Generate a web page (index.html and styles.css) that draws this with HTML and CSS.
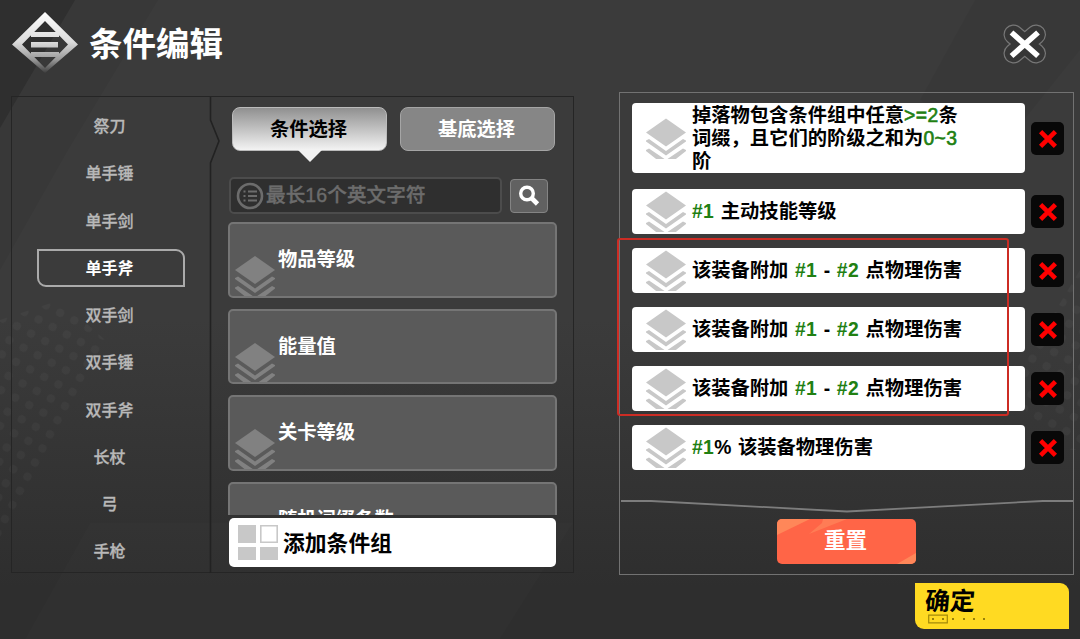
FILE: index.html
```
<!DOCTYPE html>
<html lang="zh-CN">
<head>
    <meta charset="UTF-8">
    <meta name="viewport" content="width=device-width, initial-scale=1.0">
    <title>条件编辑</title>
    <link rel="stylesheet" href="styles.css">
</head>
<body>
    <!-- Shared icons -->
    <svg class="sprite" width="0" height="0">
        <symbol id="layers" viewBox="0 0 40 40">
            <path d="M20 0 40 14 20 28 0 14z"/>
            <path d="M0 22 3 20.5 20 32.5 37 20.5 40 22 40 23 20 37 0 23z"/>
            <path d="M0 31.5 3 30 20 41.5 37 30 40 31.5 40 32.5 28 42 12 42 0 32.5z"/>
        </symbol>
        <symbol id="cross" viewBox="0 0 20 20">
            <path d="M2.6 2.7 17.4 17.3M17.4 2.7 2.6 17.3" stroke="#f00" stroke-width="4.6"/>
        </symbol>
    </svg>

    <!-- Backdrop -->
    <svg class="backdrop" viewBox="0 0 1080 639">
        <defs>
            <pattern id="dots" width="16" height="16" patternUnits="userSpaceOnUse" patternTransform="rotate(28)">
                <circle cx="8" cy="8" r="4" fill="#fff" fill-opacity=".03"/>
            </pattern>
        </defs>
        <path d="M0 0H75L0 128z" fill="#000" fill-opacity=".2"/>
        <path d="M75 0H158L68 150 0 270V128z" fill="#000" fill-opacity=".05"/>
        <path d="M975 0H1080V50L1000 150 920 100z" fill="#000" fill-opacity=".04"/>
        <path d="M90 523H573L500 639H25z" fill="#fff" fill-opacity=".012"/>
        <path d="M0 320 60 300 105 340 82 400 0 540z" fill="url(#dots)"/>
        <path d="M1080 270 1035 345 1000 380 1060 450 1080 450z" fill="url(#dots)"/>
    </svg>

    <div class="screen">
        <header class="header">
            <svg class="logo" width="68" height="64" viewBox="0 0 68 64">
                <defs>
                    <linearGradient id="logoFill" gradientUnits="userSpaceOnUse" x1="0" y1="0" x2="0" y2="62">
                        <stop offset="0" stop-color="#fff"/>
                        <stop offset=".5" stop-color="#dcdcdc"/>
                        <stop offset=".78" stop-color="#9a9a9a"/>
                        <stop offset="1" stop-color="#3e3e3e"/>
                    </linearGradient>
                </defs>
                <g fill="url(#logoFill)">
                    <path fill-rule="evenodd" d="M34 1 67 33.5 34 62 1 33.5zM34 10 11 33.5 34 57 57 33.5z"/>
                    <path d="M20 21H48V26H20zM20 31H47V36.5H20zM20 41H48V46H20z"/>
                </g>
            </svg>
            <h1 class="title">条件编辑</h1>
            <svg class="close" width="46" height="44" viewBox="0 0 46 44">
                <g fill="none" stroke-linecap="round">
                    <path d="M11.5 12.5 34 31.5M34 12.5 11.5 31.5" stroke="#777" stroke-width="20"/>
                    <path d="M11.5 12.5 34 31.5M34 12.5 11.5 31.5" stroke="#363636" stroke-width="17.6"/>
                </g>
                <path d="M9.5 10.5 36 34M36 10.5 9.5 34" stroke="#fff" stroke-width="5.6"/>
            </svg>
        </header>

        <main class="main">
            <section class="picker">
                <nav class="types">
                    <div class="type">祭刀</div>
                    <div class="type">单手锤</div>
                    <div class="type">单手剑</div>
                    <div class="type active">单手斧</div>
                    <div class="type">双手剑</div>
                    <div class="type">双手锤</div>
                    <div class="type">双手斧</div>
                    <div class="type">长杖</div>
                    <div class="type">弓</div>
                    <div class="type">手枪</div>
                </nav>
                <svg class="divider" width="12" height="476" viewBox="0 0 12 476">
                    <path d="M1.5 0V23L10 44 1.5 66V476" fill="none" stroke="#222" stroke-width="1.6"/>
                </svg>

                <div class="conditions">
                    <div class="tabs">
                        <div class="tab selected">条件选择</div>
                        <div class="tab">基底选择</div>
                    </div>

                    <div class="search">
                        <div class="search-box">
                            <svg width="28" height="28" viewBox="0 0 28 28" fill="none" stroke="#6c6c6c">
                                <circle cx="14" cy="14" r="12" stroke-width="2.6"/>
                                <path d="M7.5 9.5h2M7.5 14h2M7.5 18.5h2M12 9.5h9M12 14h9M12 18.5h9" stroke-width="1.8"/>
                            </svg>
                            <span>最长16个英文字符</span>
                        </div>
                        <div class="search-button">
                            <svg width="24" height="24" viewBox="0 0 24 24" fill="none" stroke="#fff">
                                <circle cx="10" cy="9.5" r="6.3" stroke-width="3.4"/>
                                <path d="M14.5 14 20.5 20" stroke-width="4.6"/>
                            </svg>
                        </div>
                    </div>

                    <div class="cards">
                        <div class="card"><svg><use href="#layers"/></svg><span>物品等级</span></div>
                        <div class="card"><svg><use href="#layers"/></svg><span>能量值</span></div>
                        <div class="card"><svg><use href="#layers"/></svg><span>关卡等级</span></div>
                        <div class="card"><svg><use href="#layers"/></svg><span>随机词缀条数</span></div>
                    </div>

                    <div class="add-group">
                        <svg width="40" height="35" viewBox="0 0 40 35" fill="#c8c8c8">
                            <path d="M0 0H18V18H0zM0 22H18V35H0zM22 22H40V35H22z"/>
                            <path d="M22.8.8H39.2V17.2H22.8z" fill="#fff" stroke="#c8c8c8" stroke-width="1.6"/>
                        </svg>
                        <span>添加条件组</span>
                    </div>
                </div>
            </section>

            <section class="result">
                <div class="rules">
                    <div class="rule tall">
                        <div class="rule-body">
                            <svg class="layers"><use href="#layers"/></svg>
                            <p>掉落物包含条件组中任意<em>&gt;=2</em>条<br>词缀，且它们的阶级之和为<em>0~3</em><br>阶</p>
                        </div>
                        <div class="remove"><svg><use href="#cross"/></svg></div>
                    </div>
                    <div class="rule">
                        <div class="rule-body">
                            <svg class="layers"><use href="#layers"/></svg>
                            <p><b>#1</b> 主动技能等级</p>
                        </div>
                        <div class="remove"><svg><use href="#cross"/></svg></div>
                    </div>

                    <div class="marked">
                        <div class="rule">
                            <div class="rule-body">
                                <svg class="layers"><use href="#layers"/></svg>
                                <p>该装备附加 <b>#1</b> - <b>#2</b> 点物理伤害</p>
                            </div>
                            <div class="remove"><svg><use href="#cross"/></svg></div>
                        </div>
                        <div class="rule">
                            <div class="rule-body">
                                <svg class="layers"><use href="#layers"/></svg>
                                <p>该装备附加 <b>#1</b> - <b>#2</b> 点物理伤害</p>
                            </div>
                            <div class="remove"><svg><use href="#cross"/></svg></div>
                        </div>
                        <div class="rule">
                            <div class="rule-body">
                                <svg class="layers"><use href="#layers"/></svg>
                                <p>该装备附加 <b>#1</b> - <b>#2</b> 点物理伤害</p>
                            </div>
                            <div class="remove"><svg><use href="#cross"/></svg></div>
                        </div>
                    </div>

                    <div class="rule">
                        <div class="rule-body">
                            <svg class="layers"><use href="#layers"/></svg>
                            <p><b>#1</b>% 该装备物理伤害</p>
                        </div>
                        <div class="remove"><svg><use href="#cross"/></svg></div>
                    </div>
                </div>

                <div class="actions">
                    <svg width="452" height="14" viewBox="0 0 452 14">
                        <path d="M0 2H30L226 12.5 422 2H452" fill="none" stroke="#7d7d7d" stroke-width="1.8"/>
                    </svg>
                    <div class="reset">
                        <svg width="139" height="45" viewBox="0 0 139 45" fill="#ff8759">
                            <path d="M0 0H33L0 16z"/>
                            <path d="M46 0H70L32 15 45 4z" fill="#ff7c55"/>
                            <path d="M139 34V45H120z"/>
                        </svg>
                        <span>重置</span>
                    </div>
                </div>
            </section>
        </main>

        <footer class="footer">
            <div class="confirm">
                <span>确定</span>
                <svg width="62" height="10" viewBox="0 0 62 10">
                    <path d="M.7 1.2H19.3V8.8H.7z" fill="none" stroke="#a48a08" stroke-width="1.2"/>
                    <path d="M4 5h2M14 5h2M24 5h2M35 5h2M45 5h2M55 5h2" stroke="#97800a" stroke-width="2"/>
                </svg>
            </div>
        </footer>
    </div>
</body>
</html>
```
FILE: styles.css
```
* {
    box-sizing: border-box;
}

body {
    margin: 0;
    width: 1080px;
    height: 639px;
    overflow: hidden;
    position: relative;
    background: linear-gradient(#3b3b3b 0%, #3b3b3b 50%, #2e2e2e 92%, #2e2e2e 100%);
    font-family: "Liberation Sans", "Noto Sans CJK SC", sans-serif;
    font-weight: bold;
    color: #fff;
}

svg {
    display: block;
    flex-shrink: 0;
}

.sprite,
.backdrop {
    position: absolute;
    top: 0;
    left: 0;
}

.screen {
    position: relative;
    height: 100%;
    display: flex;
    flex-direction: column;
}

/* Header */
.header {
    height: 92px;
    padding: 11px 32px 0 11px;
    display: flex;
    align-items: flex-start;
}

.title {
    margin: 9px auto 0 10px;
    font-size: 33.5px;
    line-height: 50px;
}

.close {
    margin-top: 11px;
}

.main {
    height: 483px;
    display: flex;
    align-items: flex-start;
    padding-left: 11px;
}

/* Left panel */
.picker {
    width: 563px;
    height: 477px;
    margin: 4px 45px 0 0;
    display: flex;
    border: 1.5px solid #252525;
}

.types {
    width: 197px;
    padding-top: 10px;
    display: flex;
    flex-direction: column;
    align-items: center;
    gap: 9.25px;
}

.type {
    width: 148px;
    height: 38px;
    padding-right: 2px;
    line-height: 35px;
    text-align: center;
    font-size: 16px;
    font-weight: 500;
    color: #b8b8b8;
    -webkit-text-stroke: 0.3px;
    border: 2px solid transparent;
}

.type.active {
    font-weight: bold;
    color: #fff;
    -webkit-text-stroke: 0;
    border-color: #aaa;
    border-radius: 0 9px 0 9px;
}

.conditions {
    width: 329px;
    margin-left: 7px;
    padding-top: 10px;
}

.tabs {
    display: flex;
    gap: 13px;
    padding-left: 4px;
}

.tab {
    width: 155px;
    height: 44px;
    padding-right: 2px;
    line-height: 43px;
    text-align: center;
    font-size: 19.3px;
    border: 1.5px solid #a5a5a5;
    border-radius: 8px;
    background: #868686;
    position: relative;
}

.tab.selected {
    color: #000;
    border-color: #bbb;
    background: linear-gradient(#909090, #f3f3f3);
}

.tab.selected::after {
    content: "";
    position: absolute;
    left: 65px;
    top: 42px;
    border: 12px solid transparent;
    border-top-color: #f1f1f1;
    border-bottom: 0;
}

.search {
    display: flex;
    align-items: center;
    gap: 8px;
    margin-top: 26px;
    padding-left: 1px;
}

.search-box {
    width: 273px;
    height: 37px;
    display: flex;
    align-items: center;
    gap: 2px;
    padding-left: 5px;
    border: 2px solid #4c4c4c;
    border-radius: 5px;
    background: #2f2f2f;
    color: #6c6c6c;
    font-size: 19.5px;
    font-weight: 500;
    letter-spacing: 0.15px;
    -webkit-text-stroke: 0.4px;
}

.search-box span {
    line-height: 28px;
    margin-top: -1px;
}

.search-button {
    width: 38px;
    height: 34px;
    padding: 4px 6px;
    border: 1.5px solid #848484;
    border-radius: 4px;
    background: #616161;
}

.cards {
    height: 293px;
    margin-top: 8px;
    overflow: hidden;
    display: flex;
    flex-direction: column;
    gap: 11px;
}

.card {
    height: 75.5px;
    flex-shrink: 0;
    display: flex;
    padding-left: 5px;
    overflow: hidden;
    border: 2px solid #757575;
    border-radius: 5px;
    background: #5a5a5a;
    font-size: 19.3px;
}

.card svg {
    width: 40px;
    height: 40px;
    margin-top: 32px;
    fill: #818181;
}

.card span {
    margin: 21px 0 0 3px;
    line-height: 30px;
}

.add-group {
    height: 49px;
    margin: 3px 1px 0;
    display: flex;
    align-items: center;
    padding-left: 9px;
    gap: 5px;
    border-radius: 5px;
    background: #fff;
    color: #000;
    font-size: 21.8px;
}

.add-group span {
    margin-top: -2px;
}

/* Right panel */
.result {
    width: 455px;
    height: 483px;
    border: 1.5px solid #727272;
    display: flex;
    flex-direction: column;
}

.rules {
    height: 406px;
    padding: 10px 0 0 12px;
    display: flex;
    flex-direction: column;
    gap: 14px;
}

.rule {
    display: flex;
    align-items: center;
    gap: 6px;
}

.rule-body {
    width: 393px;
    height: 45px;
    padding-left: 14px;
    display: flex;
    align-items: center;
    overflow: hidden;
    border-radius: 4px;
    background: #fff;
    color: #000;
    font-size: 19.3px;
    word-spacing: 1.2px;
}

.rule.tall {
    margin-bottom: 2px;
}

.tall .rule-body {
    height: 70px;
}

.rule-body p {
    margin: 0 0 0 6px;
    line-height: 23px;
    white-space: nowrap;
}

.rule-body b,
.rule-body em {
    color: #218012;
    font-style: normal;
}

.rule-body b {
    letter-spacing: 0.4px;
}

.rule-body em {
    font-weight: normal;
    letter-spacing: 0.4px;
    -webkit-text-stroke: 0.6px;
}

.layers {
    width: 40px;
    height: 41px;
    fill: #c8c8c8;
}

.remove {
    width: 33px;
    height: 33px;
    padding: 7px;
    border-radius: 5px;
    background: #080808;
}

.remove svg {
    width: 20px;
    height: 20px;
}

.marked {
    position: relative;
    display: flex;
    flex-direction: column;
    gap: 14px;
}

/* Red frame over the three repeated rules */
.marked::after {
    content: "";
    position: absolute;
    left: -15px;
    top: -10px;
    width: 388px;
    height: 174px;
    border: 2.5px solid #cc2c24;
    border-radius: 3px;
}

.actions {
    display: flex;
    flex-direction: column;
    align-items: center;
}

.reset {
    display: grid;
    width: 139px;
    height: 45px;
    margin-top: 6px;
    overflow: hidden;
    font-size: 21.6px;
    border-radius: 5px;
    background: #ff6547;
}

.reset svg,
.reset span {
    grid-area: 1 / 1;
}

.reset span {
    padding-right: 2px;
    line-height: 44px;
    text-align: center;
}

.footer {
    display: flex;
    justify-content: flex-end;
    padding: 8px 11px 0 0;
}

.confirm {
    width: 154px;
    height: 46px;
    padding: 3px 0 0 10px;
    border-radius: 0 9px 0 9px;
    background: #ffda22;
    color: #000;
}

.confirm span {
    display: block;
    font-size: 25px;
    line-height: 30px;
    transform: skewX(-5deg);
}

.confirm svg {
    margin: -2px 0 0 3px;
}
```
